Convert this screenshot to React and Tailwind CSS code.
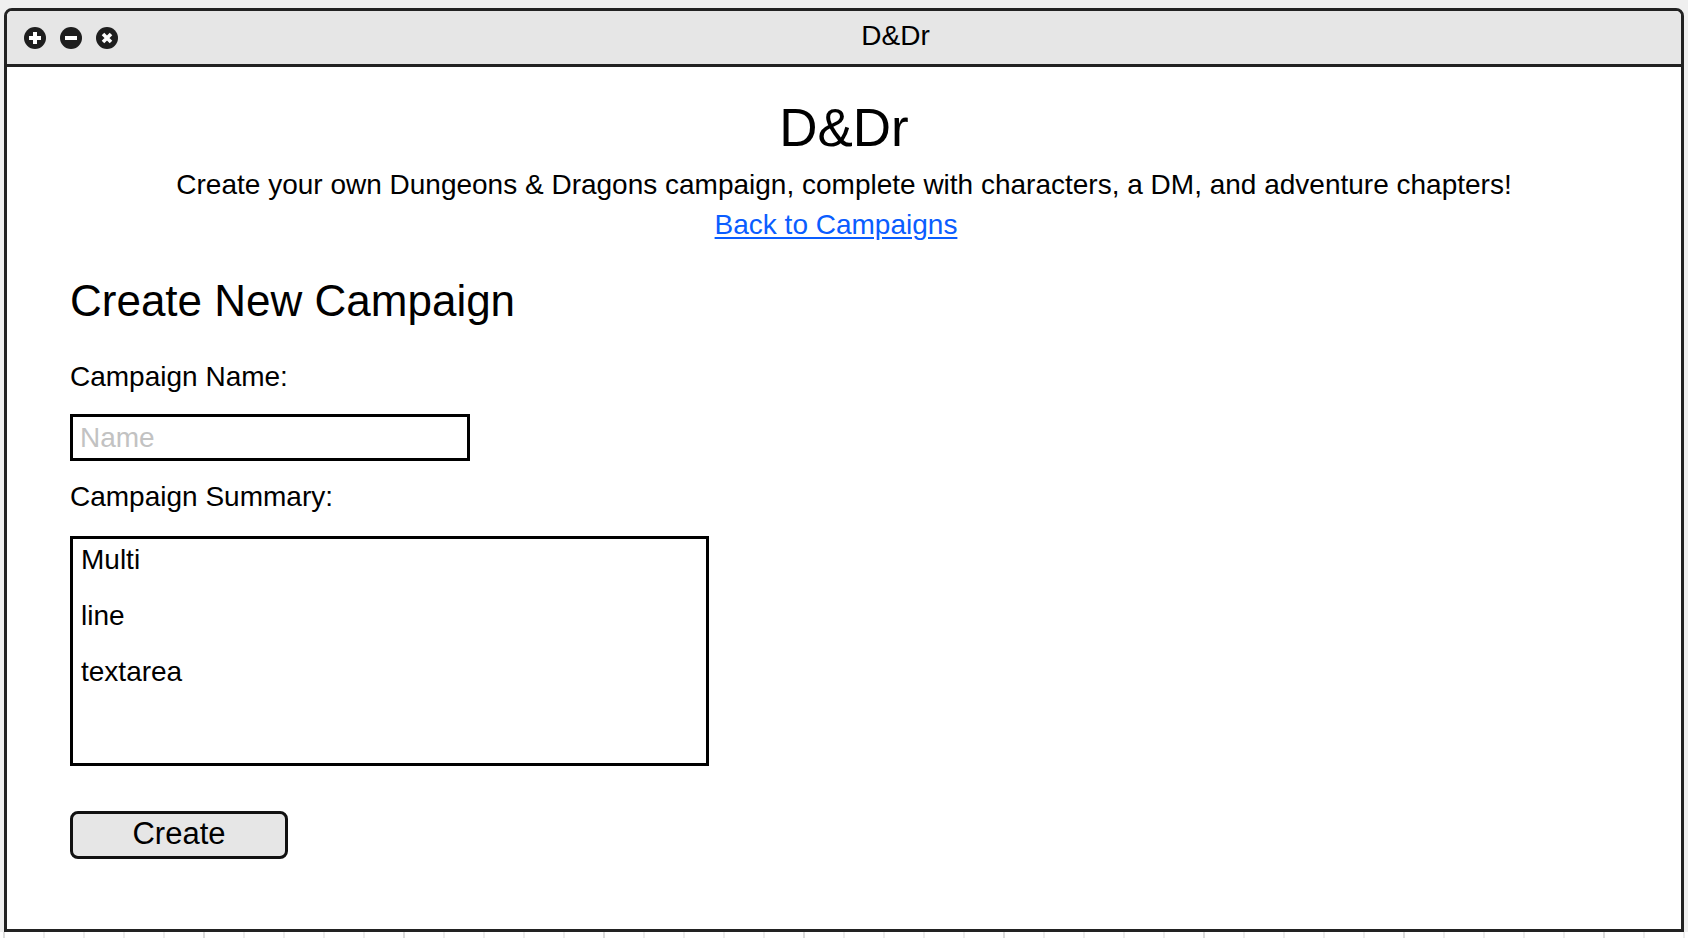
import React from 'react';

const font = { fontFamily: '"Liberation Sans", Arial, Helvetica, sans-serif' };

const PlusIcon = () => (
  <svg width="22" height="22" viewBox="0 0 22 22">
    <circle cx="11" cy="11" r="11" fill="#1e1e1e" />
    <rect x="5" y="9" width="12" height="4" fill="#fff" />
    <rect x="9" y="5" width="4" height="12" fill="#fff" />
  </svg>
);

const MinusIcon = () => (
  <svg width="22" height="22" viewBox="0 0 22 22">
    <circle cx="11" cy="11" r="11" fill="#1e1e1e" />
    <rect x="5" y="9" width="12" height="4" fill="#fff" />
  </svg>
);

const CloseIcon = () => (
  <svg width="22" height="22" viewBox="0 0 22 22">
    <circle cx="11" cy="11" r="11" fill="#1e1e1e" />
    <path d="M7 7 L15 15 M15 7 L7 15" stroke="#fff" strokeWidth="3.6" />
  </svg>
);

const App = () => {
  const ticks = [...Array(43)];

  return (
    <div className="w-[1688px] h-[938px] bg-[#efefef] overflow-hidden flex flex-col" style={font}>
      {/* Window */}
      <div className="ml-[4px] mt-[8px] w-[1680px] h-[924px] border-[3px] border-[#222] rounded-t-[8px] bg-white flex flex-col overflow-hidden">
        {/* Title bar */}
        <div className="h-[56px] bg-[#e6e6e6] border-b-[3px] border-[#222] flex items-center pl-[17px] pr-[8px]">
          <div className="flex items-center gap-[14px]">
            <PlusIcon />
            <MinusIcon />
            <CloseIcon />
          </div>
          <div className="flex-1 text-center text-[28px] leading-none text-black pb-[4px]">D&amp;Dr</div>
        </div>

        {/* Content */}
        <div className="flex-1 px-[63px]">
          <div className="text-center">
            <h1 className="mt-[34px] text-[53px] leading-none text-black">D&amp;Dr</h1>
            <p className="mt-[17px] text-[28px] leading-[28px] text-black">
              Create your own Dungeons &amp; Dragons campaign, complete with characters, a DM, and adventure chapters!
            </p>
            <p className="mt-[12px] text-[28px] leading-[28px] pr-[16px]">
              <a href="#" className="text-[#0a5dff] underline underline-offset-[3px]">Back to Campaigns</a>
            </p>
          </div>

          <h2 className="mt-[40px] text-[44px] leading-[44px] text-black">Create New Campaign</h2>

          <label className="block mt-[40px] text-[28px] leading-[28px] text-black">Campaign Name:</label>
          <input
            type="text"
            placeholder="Name"
            className="block mt-[23px] w-[400px] h-[47px] border-[3px] border-black px-[7px] text-[28px] text-black placeholder:text-[#c2c2c2] outline-none"
            style={font}
          />

          <label className="block mt-[22px] text-[28px] leading-[28px] text-black">Campaign Summary:</label>
          <textarea
            readOnly
            value={'Multi\n\nline\n\ntextarea'}
            className="block mt-[25px] w-[639px] h-[230px] border-[3px] border-black pt-[7px] px-[8px] text-[28px] leading-[28px] text-black resize-none outline-none overflow-hidden"
            style={font}
          />

          <button
            className="block mt-[45px] w-[218px] h-[48px] rounded-[8px] border-[3px] border-[#111] bg-[#e6e6e6] text-[31px] leading-none text-black pb-[3px]"
            style={font}
          >
            Create
          </button>
        </div>
      </div>

      {/* Ruler ticks below */}
      <div className="flex-1 bg-white flex pl-[3px] gap-[38px]">
        {ticks.map((_, i) => (
          <div key={i} className={`w-[2px] h-full ${i % 5 === 0 ? 'bg-[#dcdcdc]' : 'bg-[#ececec]'}`} />
        ))}
      </div>
    </div>
  );
};

export default App;
